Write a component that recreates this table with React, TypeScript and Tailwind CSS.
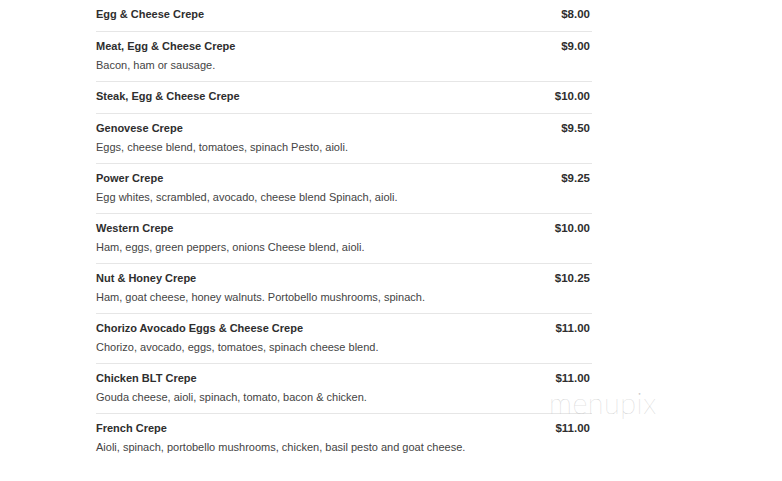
import React from "react";

const items: { name: string; price: string; desc?: string }[] = [
  { name: "Egg & Cheese Crepe", price: "$8.00" },
  { name: "Meat, Egg & Cheese Crepe", price: "$9.00", desc: "Bacon, ham or sausage." },
  { name: "Steak, Egg & Cheese Crepe", price: "$10.00" },
  { name: "Genovese Crepe", price: "$9.50", desc: "Eggs, cheese blend, tomatoes, spinach Pesto, aioli." },
  { name: "Power Crepe", price: "$9.25", desc: "Egg whites, scrambled, avocado, cheese blend Spinach, aioli." },
  { name: "Western Crepe", price: "$10.00", desc: "Ham, eggs, green peppers, onions Cheese blend, aioli." },
  { name: "Nut & Honey Crepe", price: "$10.25", desc: "Ham, goat cheese, honey walnuts. Portobello mushrooms, spinach." },
  { name: "Chorizo Avocado Eggs & Cheese Crepe", price: "$11.00", desc: "Chorizo, avocado, eggs, tomatoes, spinach cheese blend." },
  { name: "Chicken BLT Crepe", price: "$11.00", desc: "Gouda cheese, aioli, spinach, tomato, bacon & chicken." },
  { name: "French Crepe", price: "$11.00", desc: "Aioli, spinach, portobello mushrooms, chicken, basil pesto and goat cheese." },
];

export default function App() {
  return (
    <div
      className="relative w-[782px] h-[481px] overflow-hidden bg-white"
      style={{ fontFamily: '"Liberation Sans", Arial, sans-serif' }}
    >
      <div className="ml-[96px] w-[496px]">
        {items.map((it, i) => (
          <div
            key={i}
            className={`pt-[6px] ${it.desc ? "pb-[5px]" : "pb-[8px]"} ${
              i < items.length - 1 ? "border-b border-[#e6e6e6]" : ""
            }`}
          >
            <div className="flex justify-between items-center h-[17px] pr-[2px]">
              <span className="text-[11px] font-bold text-[#2e2e2e]">{it.name}</span>
              <span className="text-[11.5px] font-bold text-[#2e2e2e]">{it.price}</span>
            </div>
            {it.desc && (
              <div className="h-[21px] flex items-center text-[11px] text-[#444]">{it.desc}</div>
            )}
          </div>
        ))}
      </div>
      <div
        className="absolute left-[549px] top-[381px] text-[29px] font-extralight text-[#c8c8c8] tracking-[0.5px]"
        style={{ fontFamily: "Lato, sans-serif" }}
      >
        menupix
      </div>
    </div>
  );
}
